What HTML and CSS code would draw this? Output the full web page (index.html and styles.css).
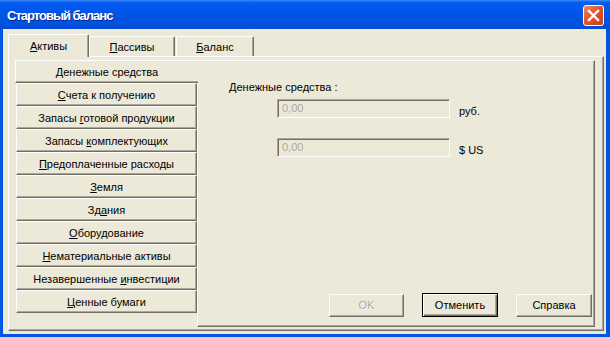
FILE: index.html
```html
<!DOCTYPE html>
<html lang="ru">
<head>
    <meta charset="UTF-8">
    <title>Стартовый баланс</title>
    <link rel="stylesheet" href="styles.css">
</head>
<body>

    <div class="window">
        <!-- Title bar -->
        <div class="titlebar">
            <span class="title">Стартовый баланс</span>
            <div class="close-btn">
                <svg width="21" height="21" viewBox="0 0 21 21">
                    <path d="M6 6 L15 15 M15 6 L6 15" stroke="#fff" stroke-width="2.4" stroke-linecap="square"/>
                </svg>
            </div>
        </div>

        <div class="client">
            <!-- Tabs -->
            <div class="tabs">
                <div class="tab tab-active tab-1"><span><u>А</u>ктивы</span></div>
                <div class="tab tab-2"><span><u>П</u>ассивы</span></div>
                <div class="tab tab-3"><span><u>Б</u>аланс</span></div>
            </div>

            <div class="tab-panel">
                <!-- Left list of sections -->
                <div class="side-list">
                    <div class="side-item side-active"><span><u>Д</u>енежные средства</span></div>
                    <div class="side-item"><span><u>С</u>чета к получению</span></div>
                    <div class="side-item"><span>Запасы <u>г</u>отовой продукции</span></div>
                    <div class="side-item"><span>Запасы <u>к</u>омплектующих</span></div>
                    <div class="side-item"><span><u>П</u>редоплаченные расходы</span></div>
                    <div class="side-item"><span><u>З</u>емля</span></div>
                    <div class="side-item"><span>Зд<u>а</u>ния</span></div>
                    <div class="side-item"><span><u>О</u>борудование</span></div>
                    <div class="side-item"><span><u>Н</u>ематериальные активы</span></div>
                    <div class="side-item"><span>Незавершенные <u>и</u>нвестиции</span></div>
                    <div class="side-item"><span><u>Ц</u>енные бумаги</span></div>
                </div>

                <!-- Right pane -->
                <div class="pane">
                    <div class="field-label">Денежные средства :</div>
                    <div class="field-row">
                        <div class="field-input">0,00</div>
                        <span class="field-unit">руб.</span>
                    </div>
                    <div class="field-row">
                        <div class="field-input">0,00</div>
                        <span class="field-unit">$ US</span>
                    </div>

                    <div class="buttons">
                        <div class="btn btn-disabled">OK</div>
                        <div class="btn btn-default"><span>Отменить</span></div>
                        <div class="btn">Справка</div>
                    </div>
                </div>
            </div>
        </div>
    </div>

</body>
</html>
```

FILE: styles.css
```css
body {
    margin: 0;
    padding: 0;
    font-family: "Liberation Sans", Arial, sans-serif;
    font-size: 11px;
    color: #000;
    background-color: #0055e5;
}

.window {
    width: 610px;
    height: 337px;
    box-sizing: border-box;
    display: flex;
    flex-direction: column;
    background-color: #0055e5;
    padding: 0 4px 3px 3px;
}

u {
    text-decoration: underline;
    text-underline-offset: 1px;
}

/* Title bar */
.titlebar {
    height: 29px;
    margin: 0 -4px 0 -3px;
    padding: 0 6px 0 7px;
    display: flex;
    align-items: center;
    justify-content: space-between;
    background: linear-gradient(to bottom, #3d8ef8 0, #0a5ff0 2px, #0058ee 6px, #0055e6 14px, #0053e0 22px, #004bd4 29px);
}

.title {
    color: #fff;
    font-weight: bold;
    font-size: 13px;
    letter-spacing: -1px;
    text-shadow: 1px 1px 0 #0a2a8a;
    margin-top: 1px;
}

.close-btn {
    width: 21px;
    height: 21px;
    box-sizing: border-box;
    border: 1px solid #fff;
    border-radius: 3px;
    background: linear-gradient(135deg, #f08a60 0, #e2552c 45%, #c8401c 100%);
    display: flex;
    align-items: center;
    justify-content: center;
    margin-top: 2px;
}

.close-btn svg {
    display: block;
    margin: -1px;
}

/* Client area */
.client {
    flex: 1;
    display: flex;
    flex-direction: column;
    background-color: #ece9d8;
    padding: 5px 2px 3px 5px;
}

.tabs {
    display: flex;
    align-items: flex-end;
    height: 22px;
}

.tab {
    height: 20px;
    box-sizing: border-box;
    border-top: 1px solid #fff;
    border-left: 1px solid #fff;
    border-right: 1px solid #716f64;
    box-shadow: inset -1px 0 0 #aca899;
    border-radius: 2px 2px 0 0;
    display: flex;
    align-items: center;
    justify-content: center;
    background-color: #ece9d8;
}

.tab-1 {
    width: 81px;
}

.tab-2 {
    width: 86px;
}

.tab-3 {
    width: 78px;
    margin-left: 1px;
}

.tab-active {
    height: 23px;
    margin-bottom: -1px;
    position: relative;
    z-index: 1;
    padding-bottom: 1px;
}

.tab-panel {
    flex: 1;
    display: flex;
    border-top: 1px solid #fff;
    border-left: 1px solid #fff;
    border-right: 1px solid #716f64;
    border-bottom: 1px solid #716f64;
    box-shadow: inset -1px -1px 0 #aca899;
    padding: 3px 7px 3px 6px;
}

/* Left list */
.side-list {
    width: 182px;
    display: flex;
    flex-direction: column;
}

.side-item {
    height: 23px;
    box-sizing: border-box;
    margin-left: 1px;
    border-top: 1px solid #fff;
    border-left: 1px solid #fff;
    border-right: 1px solid #716f64;
    border-bottom: 1px solid #716f64;
    box-shadow: inset -1px -1px 0 #aca899;
    display: flex;
    align-items: center;
    justify-content: center;
    white-space: nowrap;
}

.side-active {
    margin-left: 0;
    margin-right: -1px;
    border-right: none;
    box-shadow: inset 0 -1px 0 #aca899;
    position: relative;
    z-index: 1;
    background-color: #ece9d8;
}

/* Right pane */
.pane {
    width: 398px;
    box-sizing: border-box;
    display: flex;
    flex-direction: column;
    border-top: 1px solid #fff;
    border-left: 1px solid #fff;
    border-right: 1px solid #716f64;
    border-bottom: 1px solid #716f64;
    box-shadow: inset -1px -1px 0 #aca899;
    padding: 20px 0 9px 31px;
}

.field-label {
    line-height: 13px;
    margin-bottom: 5px;
}

.field-row {
    display: flex;
    align-items: center;
    margin-left: 48px;
    margin-bottom: 20px;
}

.field-input {
    width: 173px;
    height: 19px;
    box-sizing: border-box;
    border-top: 1px solid #aca899;
    border-left: 1px solid #aca899;
    border-right: 1px solid #fff;
    border-bottom: 1px solid #fff;
    box-shadow: inset 1px 1px 0 #716f64;
    color: #aca899;
    padding: 2px 0 0 4px;
    line-height: 13px;
}

.field-unit {
    margin-left: 9px;
    padding-top: 5px;
}

.buttons {
    margin-top: auto;
    display: flex;
    justify-content: flex-end;
    align-items: center;
    gap: 18px;
    padding-right: 2px;
}

.btn {
    width: 76px;
    height: 23px;
    box-sizing: border-box;
    border-top: 1px solid #fff;
    border-left: 1px solid #fff;
    border-right: 1px solid #716f64;
    border-bottom: 1px solid #716f64;
    box-shadow: inset -1px -1px 0 #aca899;
    display: flex;
    align-items: center;
    justify-content: center;
}

.btn-disabled {
    width: 75px;
    color: #aca899;
    text-shadow: 1px 1px 0 #fff;
}

.btn-default {
    height: 24px;
    border: 1px solid #000;
    box-shadow: inset 1px 1px 0 #fff, inset -1px -1px 0 #716f64, inset -2px -2px 0 #aca899;
}
```
